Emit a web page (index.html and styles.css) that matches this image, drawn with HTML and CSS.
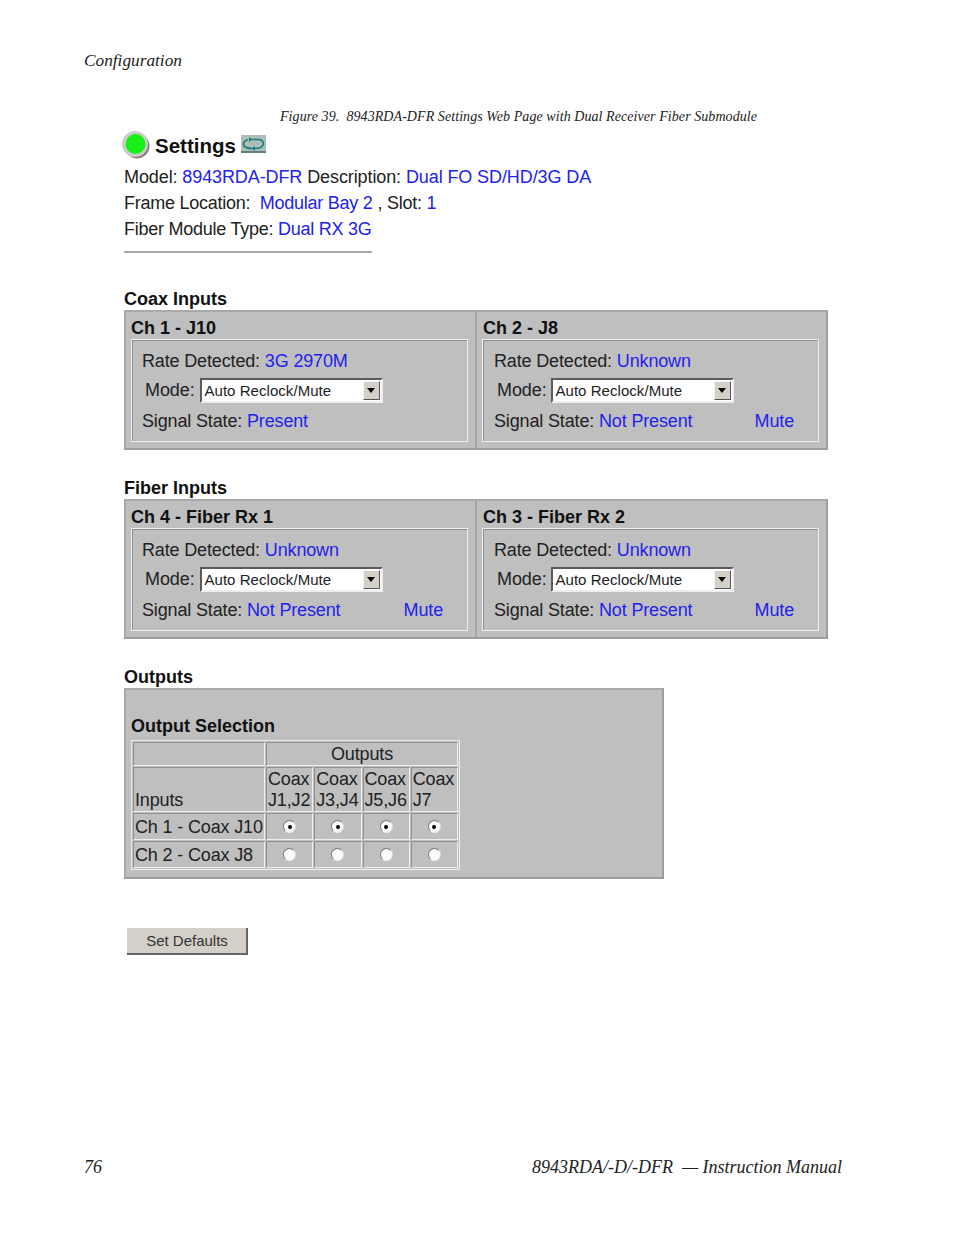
FILE: index.html
```html
<!DOCTYPE html>
<html lang="en">
<head>
<meta charset="utf-8">
<title>Configuration</title>
<link rel="stylesheet" href="styles.css">
</head>
<body>
<div class="page">
  <header class="running-head">Configuration</header>
  <p class="caption">Figure 39.&nbsp; 8943RDA-DFR Settings Web Page with Dual Receiver Fiber Submodule</p>
  <main class="shot">
    <div class="title-row">
      <svg class="led" width="30" height="30" viewBox="0 0 30 30" aria-hidden="true">
        <circle cx="16" cy="16" r="12.5" fill="#8f7d78"/>
        <circle cx="14" cy="14" r="13" fill="#c9cdc9"/>
        <circle cx="14.500" cy="14" r="10" fill="#17f017"/>
      </svg>
      <h1 class="title">Settings</h1>
      <svg class="refresh" width="25" height="18" viewBox="0 0 25 18" aria-hidden="true">
        <rect x="0" y="0" width="25" height="17" fill="#aebdb8"/>
        <rect x="0" y="16" width="25" height="2" fill="#5f7f78"/>
        <path d="M9 4.500H18C22 5 23 8 22 10C21 12.500 17 13.500 12 13.500C7 13.500 3 12.500 2.500 9.500C2.300 7.500 4 5.500 7 4.700" fill="none" stroke="#12807c" stroke-width="1.600"/>
        <path d="M8 2L11 4.500L8 7Z M14 11L11 13.500L14 16Z" fill="#12807c"/>
      </svg>
    </div>
    <p class="info">Model: <span class="val">8943RDA-DFR</span> Description: <span class="val">Dual FO SD/HD/3G DA</span></p>
    <p class="info tight">Frame Location: &nbsp;<span class="val">Modular Bay 2</span> , Slot: <span class="val">1</span></p>
    <p class="info tight">Fiber Module Type: <span class="val">Dual RX 3G</span></p>
    <hr class="rule">

    <h2 class="section first">Coax Inputs</h2>
    <section class="panel">
      <div class="channel">
        <h3 class="ch-title">Ch 1 - J10</h3>
        <div class="group">
          <p class="line">Rate Detected: <span class="val">3G 2970M</span></p>
          <div class="mode">Mode: <span class="select"><span class="select-text">Auto Reclock/Mute</span><span class="arrow"></span></span></div>
          <p class="line state"><span>Signal State: <span class="val">Present</span></span></p>
        </div>
      </div>
      <div class="channel">
        <h3 class="ch-title">Ch 2 - J8</h3>
        <div class="group">
          <p class="line">Rate Detected: <span class="val">Unknown</span></p>
          <div class="mode">Mode: <span class="select"><span class="select-text">Auto Reclock/Mute</span><span class="arrow"></span></span></div>
          <p class="line state"><span>Signal State: <span class="val">Not Present</span></span><span class="val mute">Mute</span></p>
        </div>
      </div>
    </section>

    <h2 class="section">Fiber Inputs</h2>
    <section class="panel">
      <div class="channel">
        <h3 class="ch-title">Ch 4 - Fiber Rx 1</h3>
        <div class="group">
          <p class="line">Rate Detected: <span class="val">Unknown</span></p>
          <div class="mode">Mode: <span class="select"><span class="select-text">Auto Reclock/Mute</span><span class="arrow"></span></span></div>
          <p class="line state"><span>Signal State: <span class="val">Not Present</span></span><span class="val mute">Mute</span></p>
        </div>
      </div>
      <div class="channel">
        <h3 class="ch-title">Ch 3 - Fiber Rx 2</h3>
        <div class="group">
          <p class="line">Rate Detected: <span class="val">Unknown</span></p>
          <div class="mode">Mode: <span class="select"><span class="select-text">Auto Reclock/Mute</span><span class="arrow"></span></span></div>
          <p class="line state"><span>Signal State: <span class="val">Not Present</span></span><span class="val mute">Mute</span></p>
        </div>
      </div>
    </section>

    <h2 class="section">Outputs</h2>
    <section class="panel outputs">
      <h3 class="ch-title selection">Output Selection</h3>
      <table class="matrix">
        <tr class="row-top"><td></td><td colspan="4" class="center">Outputs</td></tr>
        <tr class="heads"><td>Inputs</td><td>Coax<br>J1,J2</td><td>Coax<br>J3,J4</td><td>Coax<br>J5,J6</td><td>Coax<br>J7</td></tr>
        <tr class="row">
          <td>Ch 1 - Coax J10</td>
          <td class="center"><span class="radio on"></span></td>
          <td class="center"><span class="radio on"></span></td>
          <td class="center"><span class="radio on"></span></td>
          <td class="center"><span class="radio on"></span></td>
        </tr>
        <tr class="row">
          <td>Ch 2 - Coax J8</td>
          <td class="center"><span class="radio"></span></td>
          <td class="center"><span class="radio"></span></td>
          <td class="center"><span class="radio"></span></td>
          <td class="center"><span class="radio"></span></td>
        </tr>
      </table>
    </section>

    <div class="button">Set Defaults</div>
  </main>
  <footer class="running-foot"><span>76</span><span>8943RDA/-D/-DFR &nbsp;— Instruction Manual</span></footer>
</div>
</body>
</html>
```
FILE: styles.css
```css
* { box-sizing: border-box; }
html, body { margin: 0; padding: 0; background: #fff; }
body { width: 954px; height: 1235px; overflow: hidden; }
.page { position: relative; height: 1235px; padding: 51px 112px 0 84px; font-family: "Liberation Sans", Arial, sans-serif; color: #222; }
.running-head { font: italic 17.3px/20px "Liberation Serif", serif; color: #222; }
.caption { margin: 36px 0 0 196px; font: italic 14px/20px "Liberation Serif", serif; letter-spacing: 0.07px; color: #222; white-space: nowrap; }
.shot { margin: 3px 0 0 40px; font-size: 18px; letter-spacing: -0.1px; }
.title-row { display: flex; align-items: center; height: 30px; margin: 0 0 4px -3px; }
.led { flex: none; }
.title { margin: 2px 0 0 4px; font-size: 20.5px; line-height: 26px; color: #111; letter-spacing: 0; }
.refresh { flex: none; margin: -3px 0 0 5px; }
.info { margin: 0; height: 26px; line-height: 26px; white-space: nowrap; }
.info.tight { letter-spacing: -0.25px; }
.val { color: #2222ee; }
.rule { margin: 9px 0 0; width: 248px; height: 2px; border: 0; background: #a8a8a8; }
.section { margin: 29px 0 0; font-size: 18px; line-height: 18px; height: 20px; color: #111; letter-spacing: 0; }
.section.first { margin-top: 37px; }
.panel { display: flex; width: 704px; height: 140px; background: #bfbfbf; border: 2px solid #9d9d9d; border-top-color: #a9a9a9; border-left-color: #a9a9a9; }
.channel { width: 349px; padding: 4px 7px 0 5px; }
.channel + .channel { width: 351px; border-left: 2px solid #a5a5a5; }
.channel + .channel .ch-title { padding-left: 1px; }
.channel + .channel .group { padding-left: 11px; }
.channel + .channel .select { margin-left: 0; }
.channel + .channel .state { width: 300px; }
.ch-title { margin: 0; font-size: 18px; line-height: 24px; height: 23px; color: #111; letter-spacing: 0; }
.group { height: 103px; padding: 1px 0 0 10px; border: 1px solid #efefef; box-shadow: inset 1px 1px 0 #8f8f8f, 0 0 0 0 #bfbfbf; }
.line { margin: 0; height: 26px; line-height: 26px; white-space: nowrap; letter-spacing: -0.15px; }
.group > .line:first-child { margin-top: 8px; height: 24px; line-height: 24px; }
.mode { display: flex; align-items: center; height: 33px; margin-bottom: 2px; padding-left: 3px; line-height: 26px; white-space: pre; }
.select { display: flex; justify-content: space-between; align-items: stretch; width: 183px; height: 25px; margin: 1px 0 0 1px; background: #fff; border: 2px solid; border-color: #5b5b5b #eee #eee #5b5b5b; padding: 1px; letter-spacing: 0; }
.select-text { font-size: 15px; line-height: 19px; padding-left: 1px; letter-spacing: 0.05px; color: #222; }
.arrow { position: relative; width: 17px; background: #d4d0c8; border: 1px solid; border-color: #f4f4f4 #555 #555 #f4f4f4; }
.arrow::after { content: ""; position: absolute; left: 3px; top: 6px; border: 4px solid transparent; border-top: 5px solid #000; border-bottom: 0; }
.state { display: flex; justify-content: space-between; width: 301px; }
.outputs { display: block; width: 540px; height: 191px; padding: 23px 0 0 5px; }
.selection { height: 27px; line-height: 26px; }
.matrix { border-collapse: separate; border-spacing: 1px; width: 329px; height: 130px; table-layout: fixed; border: 1px solid; border-color: #e8e8e8 #efefef #efefef #e8e8e8; font-size: 18px; letter-spacing: -0.15px; }
.matrix td { padding: 0 1px; border: 1px solid; border-color: #8f8f8f #eee #eee #8f8f8f; vertical-align: middle; white-space: nowrap; color: #222; overflow: hidden; line-height: 22px; }
.matrix td:first-child { width: 132px; }
.row-top td { height: 24px; }
.row td { height: 27px; }
.matrix .heads td { height: 45px; vertical-align: bottom; line-height: 21px; }
.center { text-align: center; }
.radio { display: inline-block; position: relative; width: 13px; height: 13px; margin-top: -2px; border-radius: 50%; background: #fbfbfb; border: 1px solid; border-color: #777 #ddd #eee #777; vertical-align: middle; }
.radio.on::after { content: ""; position: absolute; left: 3.500px; top: 3.500px; width: 4px; height: 4px; border-radius: 50%; background: #000; }
.button { margin: 49px 0 0 3px; width: 121px; height: 27px; padding-left: 1px; background: #d4d0c8; border-right: 2px solid #666; border-bottom: 2px solid #666; font-size: 15px; line-height: 25px; text-align: center; color: #333; letter-spacing: 0; }
.running-foot { position: absolute; left: 84px; right: 112px; top: 1157px; display: flex; justify-content: space-between; font: italic 18px/20px "Liberation Serif", serif; color: #222; }
```
